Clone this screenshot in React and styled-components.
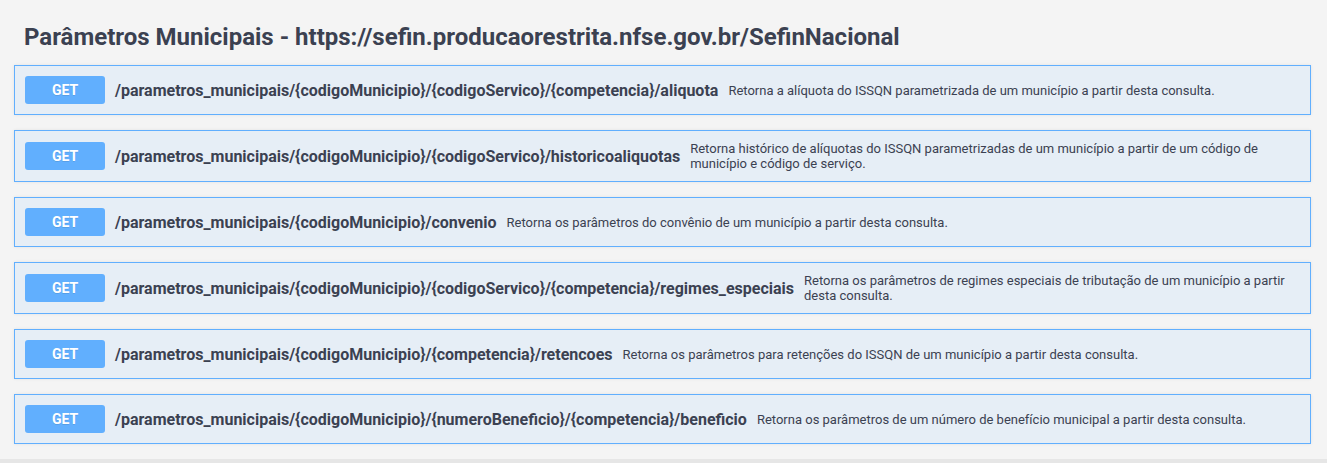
import React from "react"
import styled, { createGlobalStyle } from "styled-components"

const GlobalStyle = createGlobalStyle`
  html, body {
    margin: 0;
    padding: 0;
    background: #f4f4f4;
    font-family: Roboto, "Open Sans", sans-serif;
    color: #3b4151;
  }
`

const endpoints = [
  {
    path: "/parametros_municipais/{codigoMunicipio}/{codigoServico}/{competencia}/aliquota",
    desc: "Retorna a alíquota do ISSQN parametrizada de um município a partir desta consulta.",
  },
  {
    path: "/parametros_municipais/{codigoMunicipio}/{codigoServico}/historicoaliquotas",
    desc: "Retorna histórico de alíquotas do ISSQN parametrizadas de um município a partir de um código de município e código de serviço.",
  },
  {
    path: "/parametros_municipais/{codigoMunicipio}/convenio",
    desc: "Retorna os parâmetros do convênio de um município a partir desta consulta.",
  },
  {
    path: "/parametros_municipais/{codigoMunicipio}/{codigoServico}/{competencia}/regimes_especiais",
    desc: "Retorna os parâmetros de regimes especiais de tributação de um município a partir desta consulta.",
  },
  {
    path: "/parametros_municipais/{codigoMunicipio}/{competencia}/retencoes",
    desc: "Retorna os parâmetros para retenções do ISSQN de um município a partir desta consulta.",
  },
  {
    path: "/parametros_municipais/{codigoMunicipio}/{numeroBeneficio}/{competencia}/beneficio",
    desc: "Retorna os parâmetros de um número de benefício municipal a partir desta consulta.",
  },
]

const App = () => {
  return (
    <>
      <GlobalStyle />
      <Page>
        <Section>
          <TagTitle>Parâmetros Municipais - https://sefin.producaorestrita.nfse.gov.br/SefinNacional</TagTitle>
          <List>
            {endpoints.map((ep, i) => (
              <OpBlock key={i}>
                <Method>GET</Method>
                <Path>{ep.path}</Path>
                <Description>{ep.desc}</Description>
              </OpBlock>
            ))}
          </List>
        </Section>
        <NextSection />
      </Page>
    </>
  )
}

export default App

const Page = styled.div`
  width: 1327px;
  height: 463px;
  overflow: hidden;
  display: flex;
  flex-direction: column;
`

const Section = styled.div`
  padding: 0 16px 0 14px;
`

const TagTitle = styled.h4`
  margin: 0;
  padding: 22px 0 0 10px;
  height: 65px;
  box-sizing: border-box;
  font-size: 24px;
  line-height: 30px;
  font-weight: 700;
  color: #3b4151;
  letter-spacing: 0;
`

const List = styled.div`
  display: flex;
  flex-direction: column;
  gap: 15px;
  padding-bottom: 15px;
`

const OpBlock = styled.div`
  display: flex;
  align-items: center;
  padding: 10px;
  border: 1px solid #61affe;
  background: #e6eef6;
  box-shadow: 0 0 3px rgba(0, 0, 0, 0.08);
`

const Method = styled.span`
  flex: none;
  width: 80px;
  height: 28px;
  box-sizing: border-box;
  display: flex;
  align-items: center;
  justify-content: center;
  background: #61affe;
  border-radius: 3px;
  color: #fff;
  font-size: 14px;
  font-weight: 700;
  text-shadow: 0 1px 0 rgba(0, 0, 0, 0.1);
`

const Path = styled.span`
  flex: none;
  padding: 0 10px;
  font-size: 16px;
  font-weight: 700;
  color: #3b4151;
  white-space: nowrap;
`

const Description = styled.span`
  flex: 1;
  font-size: 13px;
  line-height: 15px;
  color: #3b4151;
`

const NextSection = styled.div`
  flex: 1;
  background: #e6e6e6;
`
